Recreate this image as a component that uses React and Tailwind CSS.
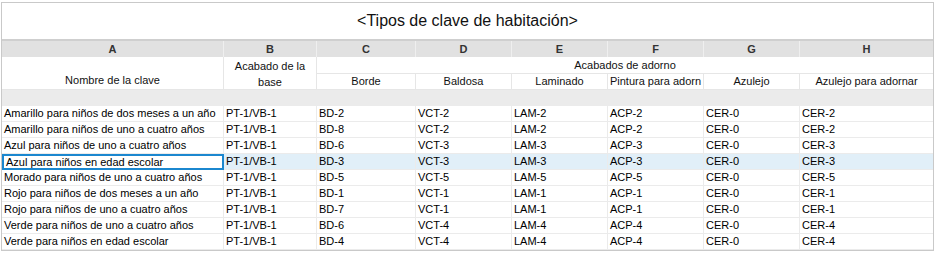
const cols = "grid-cols-[222px_93px_99px_96px_96px_96px_96px_133px]";

const rows = [
  ["Amarillo para niños de dos meses a un año", "PT-1/VB-1", "BD-2", "VCT-2", "LAM-2", "ACP-2", "CER-0", "CER-2"],
  ["Amarillo para niños de uno a cuatro años", "PT-1/VB-1", "BD-8", "VCT-2", "LAM-2", "ACP-2", "CER-0", "CER-2"],
  ["Azul para niños de uno a cuatro años", "PT-1/VB-1", "BD-6", "VCT-3", "LAM-3", "ACP-3", "CER-0", "CER-3"],
  ["Azul para niños en edad escolar", "PT-1/VB-1", "BD-3", "VCT-3", "LAM-3", "ACP-3", "CER-0", "CER-3"],
  ["Morado para niños de uno a cuatro años", "PT-1/VB-1", "BD-5", "VCT-5", "LAM-5", "ACP-5", "CER-0", "CER-5"],
  ["Rojo para niños de dos meses a un año", "PT-1/VB-1", "BD-1", "VCT-1", "LAM-1", "ACP-1", "CER-0", "CER-1"],
  ["Rojo para niños de uno a cuatro años", "PT-1/VB-1", "BD-7", "VCT-1", "LAM-1", "ACP-1", "CER-0", "CER-1"],
  ["Verde para niños de uno a cuatro años", "PT-1/VB-1", "BD-6", "VCT-4", "LAM-4", "ACP-4", "CER-0", "CER-4"],
  ["Verde para niños en edad escolar", "PT-1/VB-1", "BD-4", "VCT-4", "LAM-4", "ACP-4", "CER-0", "CER-4"],
];

const letters = ["A", "B", "C", "D", "E", "F", "G", "H"];
const selectedRow = 3;

export default function App() {
  return (
    <div
      className="w-[936px] h-[254px] bg-white pl-[1px] pt-[2px] text-[11px] text-black"
      style={{ fontFamily: '"Liberation Sans", Arial, sans-serif' }}
    >
      <div className="w-[933px] border border-[#c9c9c9]">
        <div className="h-[38px] flex items-center justify-center text-[16px] text-[#111] border-b-2 border-[#cfcfcf]">
          &lt;Tipos de clave de habitación&gt;
        </div>

        <div className={`grid ${cols}`}>
          {/* column letters */}
          {letters.map((l, i) => (
            <div
              key={l}
              className={`h-[16px] bg-[#e1e1e1] flex items-center justify-center font-bold text-[#333] ${i < 7 ? "border-r border-[#efefef]" : ""}`}
            >
              {l}
            </div>
          ))}

          {/* header rows */}
          <div className="row-span-2 h-[33px] flex items-end justify-center pb-[1px] border-r border-b border-[#e6e6e6] text-[#111]">
            Nombre de la clave
          </div>
          <div className="row-span-2 h-[33px] flex flex-col items-center pt-[1px] leading-[16px] border-r border-b border-[#e6e6e6] text-[#111]">
            <span>Acabado de la</span>
            <span>base</span>
          </div>
          <div className="col-span-6 h-[17px] flex items-center justify-center border-b border-[#e6e6e6] text-[#111]">
            Acabados de adorno
          </div>
          {["Borde", "Baldosa", "Laminado", "Pintura para adorn", "Azulejo", "Azulejo para adornar"].map((h, i) => (
            <div
              key={h}
              className={`h-[16px] flex items-center justify-center overflow-hidden whitespace-nowrap border-b border-[#e6e6e6] text-[#111] ${i < 5 ? "border-r" : ""}`}
            >
              {h}
            </div>
          ))}

          {/* blank group row */}
          <div className="col-span-8 h-[16px] bg-[#ebebeb]" />

          {/* data */}
          {rows.map((r, ri) =>
            r.map((c, ci) => {
              const sel = ri === selectedRow;
              const boxed = sel && ci === 0;
              return (
                <div
                  key={ri + "-" + ci}
                  className={`h-[16px] flex items-center whitespace-nowrap overflow-hidden ${
                    boxed
                      ? "border-2 border-[#1b87cf] pl-[2px]"
                      : `pl-[2px] border-b border-[#ebebeb] ${ci < 7 ? "border-r" : ""}`
                  } ${sel ? (boxed ? "bg-white" : "bg-[#e1eff8]") : ""}`}
                >
                  {c}
                </div>
              );
            })
          )}
        </div>
      </div>
    </div>
  );
}
